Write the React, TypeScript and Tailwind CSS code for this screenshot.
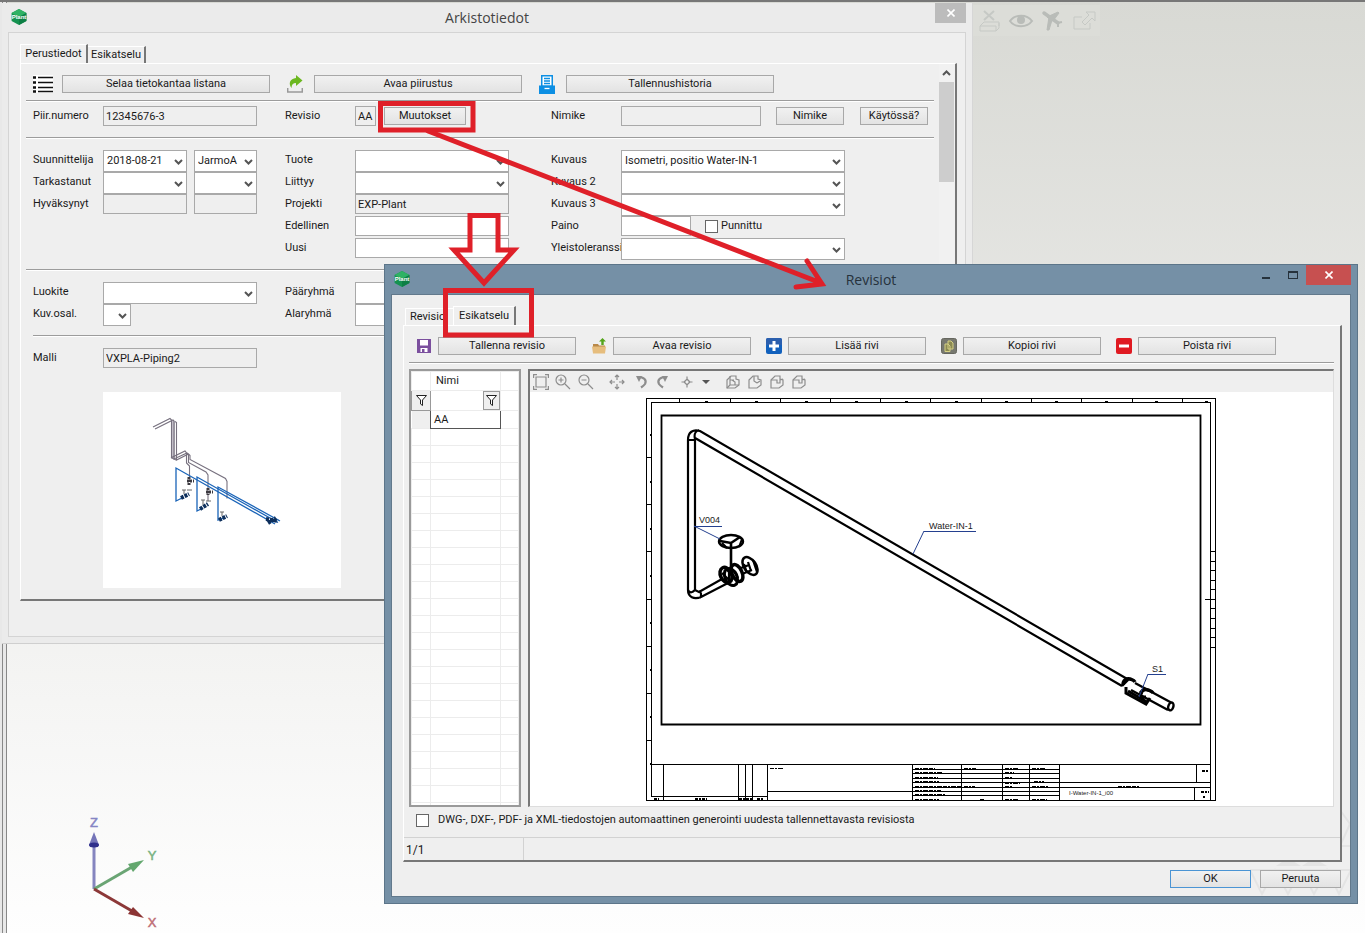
import type { ReactNode } from 'react';

const TEXT = 'font-[Roboto,sans-serif] text-[11px] leading-[14px] text-[#1a1a1a]';

function PlantLogo() {
  return (
    <svg viewBox="0 0 16 16" className="h-4 w-4" aria-hidden="true">
      <path d="M8 0l7.400 4v8L8 16 .6 12V4z" fill="#159250" />
      <path d="M8 0l7.400 4L8 8 .6 4z" fill="#2fb264" />
      <path d="M15.400 4v8L8 16V8z" fill="#0d7f45" />
      <text x="8" y="10" fontSize="6" fontWeight="700" fill="#fff" textAnchor="middle" fontFamily="Liberation Sans, sans-serif">
        Plant
      </text>
    </svg>
  );
}

function Button({ children, primary = false, className = '' }: { children: ReactNode; primary?: boolean; className?: string }) {
  return (
    <button
      type="button"
      className={`flex h-[18px] items-center justify-center border bg-gradient-to-b from-[#f1f1f1] to-[#e3e3e3] ${
        primary ? 'border-[#4a94d4]' : 'border-[#a8a8a8]'
      } ${className}`}
    >
      {children}
    </button>
  );
}

function Select({ id, label, value = '', className }: { id: string; label?: string; value?: string; className: string }) {
  return (
    <div className={`relative h-[22px] ${className}`}>
      <select
        id={id}
        aria-label={label}
        defaultValue={value}
        className="h-full w-full appearance-none border border-[#a9a9a9] bg-white pl-[3px] outline-none"
      >
        <option value={value}>{value}</option>
      </select>
      <svg viewBox="0 0 9 6" className="pointer-events-none absolute right-1 top-[9px] h-[6px] w-[9px]" aria-hidden="true">
        <path d="M1 1l3.500 3.500L8 1" fill="none" stroke="#555" strokeWidth="2" />
      </svg>
    </div>
  );
}

function Input({ id, label, value = '', readOnly = false, className }: { id: string; label?: string; value?: string; readOnly?: boolean; className: string }) {
  return (
    <input
      id={id}
      aria-label={label}
      defaultValue={value}
      readOnly={readOnly}
      className={`h-5 border border-[#a9a9a9] px-[2px] outline-none ${readOnly ? 'bg-[#efefef]' : 'bg-white'} ${className}`}
    />
  );
}

function Row({ id, label, children }: { id: string; label: string; children: ReactNode }) {
  return (
    <div className="flex h-[22px] items-start">
      <label htmlFor={id} className="w-[70px] shrink-0 pt-[3px]">
        {label}
      </label>
      {children}
    </div>
  );
}

function Rule({ className = '' }: { className?: string }) {
  return <div className={`h-[2px] border-b border-t border-b-white border-t-[#9c9c9c] ${className}`} />;
}

function ListIcon() {
  return (
    <svg viewBox="0 0 20 18" className="h-[18px] w-5" aria-hidden="true">
      <rect width="20" height="18" fill="#fff" />
      <path d="M5 2.500h15M5 7.500h15M5 12.500h15M5 16.500h15" stroke="#111" strokeWidth="1.500" />
      <path d="M0 2.500h3M0 7.500h3M0 12.500h3M0 16.500h3" stroke="#111" strokeWidth="2.600" />
    </svg>
  );
}

function OpenIcon() {
  return (
    <svg viewBox="0 0 16 18" className="h-[18px] w-4" aria-hidden="true">
      <path d="M.7 13v4h14.600v-4" fill="none" stroke="#9a9a9a" strokeWidth="1.500" />
      <path d="M9 0l6.500 5.500L9 11V8C6 8 4.500 9.500 4.500 13 1 8.500 3 3.500 9 3z" fill="#6cb820" />
    </svg>
  );
}

function ArchiveIcon() {
  return (
    <svg viewBox="0 0 16 19" className="h-[19px] w-4" aria-hidden="true">
      <path d="M2 0h12v11H2z" fill="#0d8fe3" />
      <path d="M3.500 1.500h9v9h-9z" fill="#fff" />
      <path d="M5 3.500h6M5 6h6M5 8.500h6" stroke="#0d8fe3" strokeWidth="1.300" />
      <path d="M0 10.500h16V19H0z" fill="#0d8fe3" />
      <path d="M5.500 13.500h5" stroke="#fff" strokeWidth="1.300" />
    </svg>
  );
}

function FunnelIcon() {
  return (
    <svg viewBox="0 0 11 11" className="h-[11px] w-[11px]" aria-hidden="true">
      <path d="M.5.5h10L6.500 5v5.500l-2-1.500V5z" fill="#fff" stroke="#222" />
    </svg>
  );
}

const revisionActions = [
  {
    label: 'Tallenna revisio',
    icon: (
      <>
        <path d="M1 1h14v14H1z" fill="#7b4f9e" />
        <path d="M4 2h8v5.500H4zM4.500 10h7v4h-7z" fill="#fff" />
        <path d="M6 11h2.500v3H6z" fill="#7b4f9e" />
      </>
    ),
  },
  {
    label: 'Avaa revisio',
    icon: (
      <>
        <path d="M2 6h5l1 1.500h6V10H2z" fill="#b98948" />
        <path d="M1 8.500h14l-1 7H2z" fill="#e6bd7d" />
        <path d="M10.300 7V3.500H8L11.500 0 15 3.500h-2.300V7z" fill="#55a51c" />
      </>
    ),
  },
  {
    label: 'Lisää rivi',
    icon: (
      <>
        <rect width="16" height="16" rx="2" fill="#1261bd" />
        <path d="M0 2a2 2 0 012-2h12a2 2 0 012 2v5H0z" fill="#2b5fae" />
        <path d="M8 3v10M3 8h10" stroke="#fff" strokeWidth="3" />
      </>
    ),
  },
  {
    label: 'Kopioi rivi',
    icon: (
      <>
        <rect x=".5" y=".5" width="15" height="15" rx="2" fill="#77786f" stroke="#66675f" />
        <path d="M7 3h3l2 2v6H7zM4 6h3l2 2v5.500H4z" fill="#8b8a52" stroke="#d5d084" />
      </>
    ),
  },
  {
    label: 'Poista rivi',
    icon: (
      <>
        <rect width="16" height="16" rx="2" fill="#e01a22" />
        <path d="M3 8h10" stroke="#fff" strokeWidth="3" />
      </>
    ),
  },
];

const viewerTools = [
  { label: 'Sovita', gap: '', d: 'M3 3h10v10H3zM.6 4V.6H4M12 .6h3.400V4M15.400 12v3.400H12M4 15.400H.6V12' },
  { label: 'Lähennä', gap: 'ml-[6px]', d: 'M6 1a5 5 0 100 10A5 5 0 006 1zM10 10l5 5M3.500 6h5M6 3.500v5' },
  { label: 'Loitonna', gap: 'ml-[7px]', d: 'M6 1a5 5 0 100 10A5 5 0 006 1zM10 10l5 5M3.500 6h5' },
  { label: 'Siirrä', gap: 'ml-[15px]', d: 'M8 1v5M8 10v5M1 8h5M10 8h5M6 3l2-2 2 2M6 13l2 2 2-2M3 6L1 8l2 2M13 6l2 2-2 2' },
];

// the four box icons differ only in how much of the front notch is shown
const boxTools = [
  { label: 'Rautalanka', d: 'M5 2v9h9M2 14l3-3M7 6l3 2v3M5 6h4' },
  { label: 'Piiloviivat', d: 'M7 2v5l3 2M10 9l3-2' },
  { label: 'Varjostus', d: 'M2 6h6v3h3V6l3-1' },
  { label: 'Särmät', d: 'M2 6h6v3h3V6l3-1' },
];

function ViewerTool({ label, gap, children }: { label: string; gap: string; children: ReactNode }) {
  return (
    <button type="button" aria-label={label} className={gap}>
      <svg viewBox="0 0 16 16" className="h-4 w-4" fill="none" stroke="#8d8d8d" strokeWidth="1.200" aria-hidden="true">
        {children}
      </svg>
    </button>
  );
}

function ViewerToolbar() {
  return (
    <div className="flex h-[21px] items-center bg-[#efefef] pl-[3px]">
      {viewerTools.map((t) => (
        <ViewerTool key={t.label} label={t.label} gap={t.gap}>
          <path d={t.d} />
        </ViewerTool>
      ))}
      <ViewerTool label="Kierrä oikealle" gap="ml-[8px]">
        <path d="M5 3c6 0 9 3 7 7-1 1.500-2.500 2.500-4 3.500" strokeWidth="2.200" />
        <path d="M3 2h6L6 8z" fill="#8d8d8d" stroke="none" />
      </ViewerTool>
      <ViewerTool label="Kierrä vasemmalle" gap="ml-[6px]">
        <path d="M11 3C5 3 2 6 4 10c1 1.500 2.500 2.500 4 3.500" strokeWidth="2.200" />
        <path d="M13 2H7l3 6z" fill="#8d8d8d" stroke="none" />
      </ViewerTool>
      <ViewerTool label="Keskipiste" gap="ml-[8px]">
        <path d="M8 5l3 3-3 3-3-3zM8 2.500v4M8 9.500v4M2.500 8h4M9.500 8h4" />
      </ViewerTool>
      <ViewerTool label="Valikko" gap="ml-[3px]">
        <path d="M4 6h8l-4 4z" fill="#555" stroke="none" />
      </ViewerTool>
      {boxTools.map((t, i) => (
        <ViewerTool key={t.label} label={t.label} gap={i === 0 ? 'ml-[11px]' : 'ml-[6px]'}>
          <path d="M2 6l4-4h5v3l3 1v5l-4 3H2z" />
          <path d={t.d} />
        </ViewerTool>
      ))}
    </div>
  );
}

function PipingPreview() {
  return (
    <svg viewBox="103 392 238 196" className="ml-[70px] h-[196px] w-[238px] bg-white" role="img" aria-label="VXPLA-Piping2">
      <path d="M171 421h4v37h-4z" fill="#c4c1ca" />
      <g fill="none" stroke="#77717f" strokeWidth="1.100">
        <path d="M153 427l17-8.500 1.500 1.500v37.500l13.500-6.500 1.500 2v10l3 3v14" />
        <path d="M155 429l18-9 1 1v38l13-6 1.500 1.500v8L206 472l2 3v26" />
        <path d="M175 421.500l1.500 1v37.500l12-6 1.500 1.500v4l35.500 19 1.500 3v17" />
        <path d="M171 457.500l5 2.500" />
      </g>
      <g fill="none" stroke="#1a64b8" strokeWidth="1.300">
        <path d="M182 498l-6 3v-33l99 56" />
        <path d="M203 508l-6 3v-34l81 45.500" />
        <path d="M224 518l-6 2v-33l62 34" />
      </g>
      <g stroke="#0d2f5c" strokeWidth="4" strokeDasharray="3 1">
        <path d="M181 498l8-4M200 509l8-5M219 520l8-4M266 519l12 2M268 523l8-5" />
      </g>
      <g stroke="#3c3a40" strokeWidth="3" strokeDasharray="2 1">
        <path d="M187 481h7M189 477v8M206 492h7M208 488v7" />
      </g>
      <path d="M187 490h5M206 501h5M182 490h4M201 500h4M220 512h4M184 490v4M203 500v5M222 512v4" stroke="#666" />
    </svg>
  );
}

function IsometricDrawing() {
  const topTicks = [679, 730, 780, 830, 880, 930, 981, 1031, 1081, 1132, 1182];
  const leftTicks = [457, 504, 551, 599, 646, 693, 740];
  const rightTicks = [551, 561, 570, 580, 589, 599, 608, 618, 628, 637, 647];
  return (
    <svg viewBox="530 392 803 414" className="block h-[414px] w-full bg-white" role="img" aria-label="Isometri, positio Water-IN-1">
      <g fill="none" stroke="#000" shapeRendering="crispEdges">
        <path d="M646.500 398.500h569v402h-569zM651.500 796.500v-394h559v398" />
        {topTicks.map((x) => (
          <path key={x} d={`M${x}.5 398v4`} />
        ))}
        {leftTicks.map((y) => (
          <path key={y} d={`M646 ${y}.5h5`} />
        ))}
        {rightTicks.map((y) => (
          <path key={y} d={`M1210 ${y}.5h6`} />
        ))}
        <path d="M1205 599.500h6M651 764.500h559M663.500 764v36M738.500 764v36M745.500 764v36M752.500 764v36M767.500 764v36M651 796.500h116M767 791.500h145" />
        <path d="M912.500 764v36M961.500 764v36M1002.500 764v36M1029.500 764v36M1059.500 764v36M912 769.500h147M912 773.500h147M912 778.500h147M912 782.500h298M912 787.500h298M912 791.500h147M912 795.500h147" />
        <path d="M1196.500 764v18M1194.500 787v13" />
        <g strokeWidth="1" strokeDasharray="4 1 2 1 5 1">
          <path d="M915 768.500h20M915 772.500h28M915 777.500h23M915 781.500h24M915 786.500h46M915 790.500h26M915 794.500h30M915 799.500h24" />
          <path d="M964 768.500h12M964 786.500h11M980 799.500h4M1005 768.500h14M1005 772.500h9M1005 777.500h8M1005 783.500h15M1005 786.500h7M1005 799.500h14" />
          <path d="M1032 768.500h14M1034 781.500h10M1032 786.500h16M1032 799.500h15M1118 786.500h21M770 768.500h14" />
        </g>
        <path strokeWidth="2" strokeDasharray="3 1 2 1" d="M1202 771h7M1201 792h8M1203 797h2M654 799h5M695 799h12M739 799h13M757 799h6" />
        <path strokeDasharray="3 47" d="M705 401.500h505" />
        <path strokeWidth="2" strokeDasharray="2 45" d="M651 434v340" />
      </g>
      <path d="M661.500 415.500h539v309h-539z" fill="none" stroke="#000" strokeWidth="1.800" />

      <g fill="none" stroke="#000" strokeWidth="2.200">
        <path d="M688 590V440c0-8 5-11 12-9l429 249M695 590V438l427 248M688 440h7M695 439c-1-4 0-8 4-9" />
        <path d="M688 590c0 7 6 10 13 7l27-14M688 590c2 4 5 2 7 0l4 2 23-13M699 591c2 1 3 4 1 7" />
      </g>
      <g fill="none" stroke="#000">
        <ellipse cx="731" cy="541.500" rx="12" ry="6.500" strokeWidth="2.400" />
        <path d="M720 541l11 2 9-6M731 543v28" strokeWidth="2.600" />
        <path d="M722 543l5 5M742 539l-3 8" strokeWidth="2" />
        <ellipse cx="726" cy="575" rx="5.500" ry="8" transform="rotate(-25 726 575)" strokeWidth="3.500" />
        <ellipse cx="731" cy="577" rx="6" ry="9" transform="rotate(-25 731 577)" strokeWidth="3" />
        <ellipse cx="737" cy="573" rx="5" ry="9" transform="rotate(-25 737 573)" strokeWidth="3.500" />
        <ellipse cx="750" cy="566" rx="6" ry="10" transform="rotate(-35 750 566)" strokeWidth="2.500" />
        <path d="M722 573l8 8M725 568l10 10M741 568l8-3M742 574l10-4M744 564l3 9M748 562l3 9M729 571v10M733 570l5 8M753 560l4 12" strokeWidth="2.200" />
      </g>
      <g fill="none" stroke="#000" strokeWidth="2.400">
        <path d="M1135 683l37 20M1131 690l37 20" />
        <path d="M1128 680l-6 6" />
        <ellipse cx="1171" cy="706.500" rx="2.500" ry="4" transform="rotate(20 1171 706)" fill="#fff" />
        <path d="M1123 685c0-5 4-7 7-6s4 1 5 3M1141 694c0-4 4-5 7-4s4 1 5 3" strokeWidth="3.500" />
        <path d="M1126 687v6l20 11 4-6" strokeWidth="3" />
        <path d="M1128 691l19 11M1141 691v6h5" strokeWidth="3" />
      </g>
      <g fill="none" stroke="#24408f">
        <path d="M694 526l26 13M694 526.500h28M913 554l11-23M924 531.500h52M1139 697l9-23M1148 674.500h18" />
      </g>
      <g fontFamily="Liberation Sans, sans-serif" fontSize="9" fill="#222">
        <text x="699" y="523">V004</text>
        <text x="929" y="529">Water-IN-1</text>
        <text x="1152" y="672">S1</text>
        <text x="1069" y="795" fontSize="6">I-Water-IN-1_i00</text>
      </g>
    </svg>
  );
}

function ArchiveWindow() {
  return (
    <section className="absolute left-[2px] right-[392px] top-[3px] border-r border-[#d6d6d6] bg-[#ebebeb] px-[6px] pb-[6px] shadow-[0_1px_0_#cfcfcf]">
      <header className="relative flex h-[29px] items-center justify-center">
        <div className="absolute left-[3px] top-[6px]">
          <PlantLogo />
        </div>
        <h1 className="font-['Open_Sans',sans-serif] text-[14px] text-[#444]">Arkistotiedot</h1>
        <button type="button" aria-label="Sulje" className="absolute right-0 top-0 flex h-5 w-[31px] items-center justify-center bg-[#bcbcbc]">
          <svg viewBox="0 0 8 8" className="h-2 w-2" aria-hidden="true">
            <path d="M.5.5l7 7M7.500.5l-7 7" stroke="#fff" strokeWidth="1.600" />
          </svg>
        </button>
      </header>

      <div className="border border-[#d4d4d4] bg-[#efefef] pb-[35px] pl-[11px] pr-[8px] pt-[11px]">
        <div role="tablist" className="flex h-[19px] items-end">
          <button type="button" role="tab" aria-selected="true" className="h-[19px] w-[68px] border-l border-r-2 border-t border-l-white border-r-[#777] border-t-white">
            Perustiedot
          </button>
          <button type="button" role="tab" aria-selected="false" className="h-[17px] w-[58px] border-r-2 border-t border-r-[#777] border-t-white">
            Esikatselu
          </button>
        </div>

        <div className="flex border-b-2 border-l border-r-2 border-t border-b-[#777] border-l-white border-r-[#777] border-t-white">
          <div className="min-w-0 flex-1 overflow-hidden px-[5px] pb-[11px] pt-[11px]">
            <div className="flex h-[18px] items-center px-[7px]">
              <ListIcon />
              <Button className="ml-[9px] mr-[17px] w-[208px]">Selaa tietokantaa listana</Button>
              <OpenIcon />
              <Button className="ml-[11px] mr-[17px] w-[208px]">Avaa piirustus</Button>
              <ArchiveIcon />
              <Button className="ml-[11px] w-[208px]">Tallennushistoria</Button>
            </div>
            <Rule className="mt-[7px]" />

            <div className="mt-[4px] flex px-[7px]">
              <Row id="number" label="Piir.numero">
                <Input id="number" value="12345676-3" readOnly className="w-[154px]" />
              </Row>
              <div className="ml-[28px] flex">
                <Row id="revision" label="Revisio">
                  <Input id="revision" value="AA" readOnly className="w-[21px]" />
                  <Button className="ml-[8px] mt-px w-[82px]">Muutokset</Button>
                </Row>
              </div>
              <div className="ml-[85px] flex">
                <Row id="item" label="Nimike">
                  <Input id="item" readOnly className="w-[140px]" />
                  <Button className="ml-[15px] mt-px w-[68px]">Nimike</Button>
                  <Button className="ml-[16px] mt-px w-[68px]">Käytössä?</Button>
                </Row>
              </div>
            </div>
            <Rule className="mt-[9px]" />

            <div className="mt-[11px] flex px-[7px]">
              <div>
                <Row id="designer" label="Suunnittelija">
                  <Select id="designer" value="2018-08-21" className="w-[84px]" />
                  <Select id="designer-name" label="Suunnittelijan nimi" value="JarmoA" className="ml-[7px] w-[63px]" />
                </Row>
                <Row id="checked" label="Tarkastanut">
                  <Select id="checked" className="w-[84px]" />
                  <Select id="checked-name" label="Tarkastajan nimi" className="ml-[7px] w-[63px]" />
                </Row>
                <Row id="approved" label="Hyväksynyt">
                  <Input id="approved" readOnly className="w-[84px]" />
                  <Input id="approved-name" label="Hyväksyjän nimi" readOnly className="ml-[7px] w-[63px]" />
                </Row>
              </div>
              <div className="ml-[28px]">
                <Row id="product" label="Tuote">
                  <Select id="product" className="w-[154px]" />
                </Row>
                <Row id="related" label="Liittyy">
                  <Select id="related" className="w-[154px]" />
                </Row>
                <Row id="project" label="Projekti">
                  <Input id="project" value="EXP-Plant" readOnly className="w-[154px]" />
                </Row>
                <Row id="previous" label="Edellinen">
                  <Input id="previous" className="w-[154px]" />
                </Row>
                <Row id="next" label="Uusi">
                  <Input id="next" className="w-[154px]" />
                </Row>
              </div>
              <div className="ml-[42px]">
                <Row id="desc1" label="Kuvaus">
                  <Select id="desc1" value="Isometri, positio Water-IN-1" className="w-[224px]" />
                </Row>
                <Row id="desc2" label="Kuvaus 2">
                  <Select id="desc2" className="w-[224px]" />
                </Row>
                <Row id="desc3" label="Kuvaus 3">
                  <Select id="desc3" className="w-[224px]" />
                </Row>
                <Row id="weight" label="Paino">
                  <Input id="weight" className="w-[70px]" />
                  <label className="ml-[14px] flex h-5 items-center gap-[3px]">
                    <input type="checkbox" className="h-[13px] w-[13px] appearance-none border border-[#666] bg-white" />
                    Punnittu
                  </label>
                </Row>
                <Row id="tolerance" label="Yleistoleranssi">
                  <Select id="tolerance" className="w-[224px]" />
                </Row>
              </div>
            </div>
            <Rule className="mt-[9px]" />

            <div className="mt-[11px] flex px-[7px]">
              <div>
                <Row id="category" label="Luokite">
                  <Select id="category" className="w-[154px]" />
                </Row>
                <Row id="parts" label="Kuv.osal.">
                  <Select id="parts" className="w-[28px]" />
                </Row>
              </div>
              <div className="ml-[28px]">
                <Row id="main-group" label="Pääryhmä">
                  <Select id="main-group" className="w-[154px]" />
                </Row>
                <Row id="sub-group" label="Alaryhmä">
                  <Select id="sub-group" className="w-[154px]" />
                </Row>
              </div>
            </div>
            <Rule className="ml-[7px] mt-[9px]" />

            <div className="mt-[11px] px-[7px]">
              <Row id="model" label="Malli">
                <Input id="model" value="VXPLA-Piping2" readOnly className="w-[154px]" />
              </Row>
              <div className="mt-[22px]">
                <PipingPreview />
              </div>
            </div>
          </div>

          <div className="w-4 bg-[#f1f1f1] pr-px">
            <div className="flex h-[18px] items-center justify-center">
              <svg viewBox="0 0 9 6" className="h-[6px] w-[9px]" aria-hidden="true">
                <path d="M1 5l3.500-3.500L8 5" fill="none" stroke="#555" strokeWidth="2" />
              </svg>
            </div>
            <div className="h-[100px] bg-[#cdcdcd]" />
          </div>
        </div>
      </div>
    </section>
  );
}

function RevisionTable() {
  return (
    <div className="h-[438px] w-[112px] shrink-0 overflow-hidden border-2 border-[#9a9a9a] bg-white">
      <table className="w-full table-fixed border-collapse text-left">
        <colgroup>
          <col className="w-[19px]" />
          <col className="w-[70px]" />
          <col />
        </colgroup>
        <thead>
          <tr className="h-[19px]">
            <th className="border border-[#ececec] p-0" />
            <th className="border border-[#ececec] p-0 pl-[5px] font-normal">Nimi</th>
            <th className="border border-[#ececec] p-0" />
          </tr>
          <tr className="h-[20px]">
            <th className="border border-[#999] bg-[#efefef] p-0 pl-[4px]">
              <FunnelIcon />
            </th>
            <th className="border border-[#ececec] p-0">
              <div className="flex">
                <input aria-label="Suodata nimi" className="w-[52px] outline-none" />
                <span className="flex h-[19px] flex-1 items-center justify-center border border-[#999] bg-[#efefef]">
                  <FunnelIcon />
                </span>
              </div>
            </th>
            <th className="border border-[#ececec] p-0" />
          </tr>
        </thead>
        <tbody>
          <tr className="h-[18px]">
            <td className="bg-[#efefef] p-0" />
            <td className="border border-[#555] p-0 pl-[3px]">AA</td>
            <td className="border border-[#ececec] p-0" />
          </tr>
          {Array.from({ length: 23 }, (_, i) => (
            <tr key={i} className="h-[17px]">
              <td className="border border-[#ececec]" />
              <td className="border border-[#ececec]" />
              <td className="border border-[#ececec]" />
            </tr>
          ))}
        </tbody>
      </table>
    </div>
  );
}

function RevisionsWindow() {
  return (
    <section className="absolute left-[384px] right-[7px] top-[264px] border border-[#5c7589] bg-[#7590a6] px-[6px] pb-[6px]">
      <header className="relative flex h-[29px] items-center justify-center">
        <div className="absolute left-[3px] top-[6px]">
          <PlantLogo />
        </div>
        <h2 className="font-['Open_Sans',sans-serif] text-[14px] text-[#26323c]">Revisiot</h2>
        <div className="absolute right-0 top-0 flex h-5 items-center">
          <button type="button" aria-label="Pienennä" className="w-[26px] pt-[6px]">
            <span className="mx-auto block h-[2px] w-2 bg-[#26323c]" />
          </button>
          <button type="button" aria-label="Suurenna" className="w-[27px]">
            <span className="mx-auto block h-2 w-[10px] border border-t-2 border-[#26323c]" />
          </button>
          <button type="button" aria-label="Sulje" className="flex h-5 w-[45px] items-center justify-center bg-[#c75050]">
            <svg viewBox="0 0 8 8" className="h-2 w-2" aria-hidden="true">
              <path d="M.5.5l7 7M7.500.5l-7 7" stroke="#fff" strokeWidth="1.600" />
            </svg>
          </button>
        </div>
      </header>

      <div className="relative border border-[#62798c] bg-[#efefef] pb-[8px] pl-[11px] pr-[8px] pt-[11px]">
        <svg viewBox="0 0 120 96" className="absolute bottom-0 right-0 h-24 w-[120px]" fill="none" stroke="#e4e4e4" strokeWidth="2" aria-hidden="true">
          <path d="M20 70h100M20 70l12 24 13-24 13 24 13-24 13 24 13-24 12 24 12-24M110 10l10 14-10 22M110 46h10" />
          <path d="M46 66l12-8 13 8zM72 66l12-8 13 8z" fill="#e4e4e4" stroke="none" />
        </svg>
        <div role="tablist" className="relative flex h-[19px] items-end">
          <button type="button" role="tab" aria-selected="false" className="ml-[2px] h-[17px] w-[48px] border-l border-t border-l-white border-t-white pl-[4px] text-left">
            Revisio
          </button>
          <button type="button" role="tab" aria-selected="true" className="h-[19px] w-[63px] border-l border-r-2 border-t border-l-white border-r-[#777] border-t-white">
            Esikatselu
          </button>
        </div>

        <div className="relative border-b-2 border-l border-r-2 border-t border-b-[#777] border-l-white border-r-[#777] border-t-white bg-[#efefef] pt-[11px]">
          <div className="flex gap-[15px] pl-[12px]">
            {revisionActions.map((action) => (
              <div key={action.label} className="flex items-center gap-[6px]">
                <svg viewBox="0 0 16 16" className="h-4 w-4" aria-hidden="true">
                  {action.icon}
                </svg>
                <Button className="w-[138px]">{action.label}</Button>
              </div>
            ))}
          </div>
          <Rule className="ml-[5px] mr-[6px] mt-[7px]" />

          <div className="ml-[5px] mr-[6px] mt-[5px] flex gap-[7px]">
            <RevisionTable />
            <div className="min-w-0 flex-1 border-b border-l-2 border-r border-t-2 border-b-[#ddd] border-l-[#777] border-r-[#ddd] border-t-[#777]">
              <ViewerToolbar />
              <IsometricDrawing />
            </div>
          </div>

          <label className="ml-[12px] mt-[6px] flex h-[14px] items-center gap-[9px]">
            <input type="checkbox" className="h-[13px] w-[13px] appearance-none border border-[#666] bg-white" />
            DWG-, DXF-, PDF- ja XML-tiedostojen automaattinen generointi uudesta tallennettavasta revisiosta
          </label>
          <div className="mt-[10px] flex h-[23px] border-t border-[#d2d2d2]">
            <div className="w-[120px] border-r border-[#d2d2d2] pl-[2px] pt-[5px] text-[12px]">1/1</div>
          </div>
        </div>

        <div className="relative mt-[8px] flex justify-end gap-[9px] pr-px">
          <Button primary className="w-[81px]">
            OK
          </Button>
          <Button className="w-[81px]">Peruuta</Button>
        </div>
      </div>
    </section>
  );
}

function AxisTriad() {
  return (
    <svg viewBox="60 800 130 133" className="absolute bottom-0 left-[60px] h-[133px] w-[130px]" aria-hidden="true">
      <path d="M94 889V845" stroke="#8585bf" strokeWidth="3" />
      <path d="M94 832l5 13c-2 3-8 3-10 0z" fill="#7474b8" />
      <ellipse cx="94" cy="845" rx="5" ry="2.500" fill="#2f2f8c" />
      <path d="M94 889l38-22" stroke="#6aa574" strokeWidth="3" />
      <path d="M144 860l-16 4 5 8z" fill="#63a76e" />
      <path d="M94 889l38 22" stroke="#8c3838" strokeWidth="3" />
      <path d="M144 918l-11-11-5 7z" fill="#8c3434" />
      <g fontFamily="Liberation Sans, sans-serif" fontSize="13" textAnchor="middle" strokeWidth=".5">
        <text x="94" y="827" fill="#8585c4" stroke="#8585c4">Z</text>
        <text x="152" y="860" fill="#79b383" stroke="#79b383">Y</text>
        <text x="152" y="927" fill="#c07078" stroke="#c07078">X</text>
      </g>
    </svg>
  );
}

function DesktopTools() {
  return (
    <svg viewBox="972 5 128 31" className="absolute left-[972px] top-[5px] h-[31px] w-[128px]" fill="none" stroke="#c6c9c5" aria-hidden="true">
      <path d="M972 5h128v31H972z" fill="#dcddd8" stroke="none" />
      <path d="M984 11l10 9M994 11l-10 9" strokeWidth="2" />
      <path d="M980 26l4-4h15v4M980 26h16v5h-16zM996 31l3-3v-5" />
      <path d="M1010 21c5-7 17-7 22 0-5 7-17 7-22 0z" strokeWidth="2" stroke="#b9bcb8" />
      <circle cx="1021" cy="20" r="4" fill="#b9bcb8" stroke="none" />
      <path d="M1044 13l14 10" strokeWidth="3.500" strokeLinecap="round" stroke="#b9bcb8" />
      <path d="M1047 17l11-5 1 1-6 8zM1049 17l3 3-3 10h-2z" fill="#b9bcb8" stroke="#b9bcb8" />
      <path d="M1057 23l5-1M1058 23v4" strokeWidth="2" stroke="#b9bcb8" />
      <path d="M1082 17h-8v12h16v-6M1082 22l7-7-3-3h9v9l-3-3-7 7z" />
    </svg>
  );
}

function Annotations() {
  return (
    <svg viewBox="0 0 860 350" className="pointer-events-none absolute left-0 top-0 h-[350px] w-[860px]" fill="none" stroke="#df2029" strokeWidth="5" aria-hidden="true">
      <path d="M380.500 103.500h92.500v26.500h-92.500zM445.500 290.500h86v44.500h-86z" />
      <path d="M428 131l393 152M807 261l15 23-26 3" strokeLinecap="round" />
      <path d="M470 215.500h28V250h16l-30 33-30-33h16z" />
    </svg>
  );
}

export default function App() {
  return (
    <main className={`relative min-h-screen overflow-hidden bg-gradient-to-b from-[#d8d9d4] via-[#ececea] to-[#fefefe] ${TEXT}`}>
      <div className="h-[2px] bg-[#777]" />
      <div className="absolute bottom-0 left-0 top-[2px] w-[7px] border-r border-[#888] bg-[#e8e8e8]">
        <div className="ml-[2px] h-full border-l border-[#888]" />
      </div>
      <DesktopTools />
      <AxisTriad />
      <ArchiveWindow />
      <RevisionsWindow />
      <Annotations />
    </main>
  );
}
